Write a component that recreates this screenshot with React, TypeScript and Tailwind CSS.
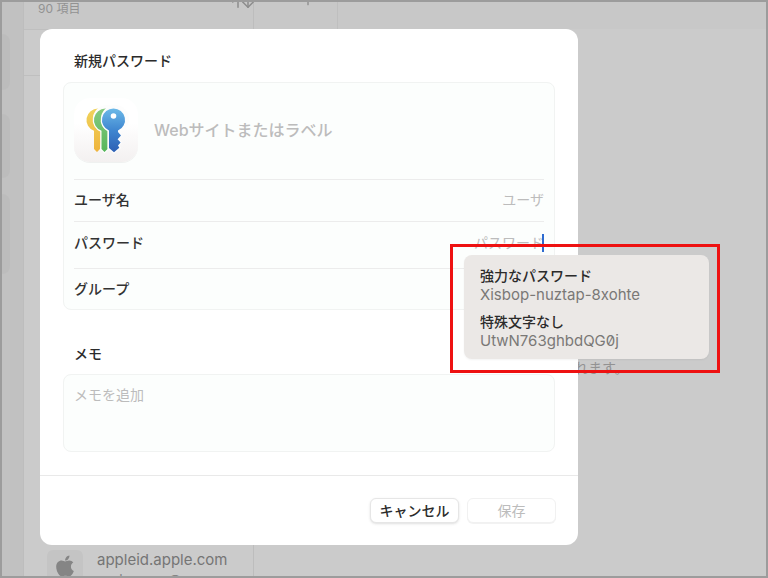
import React from 'react';
import { FaApple } from 'react-icons/fa';
import { ArrowDown, ArrowUp, Plus } from 'lucide-react';

interface Suggestion {
  title: string;
  value: string;
}

const suggestions: Suggestion[] = [
  { title: '強力なパスワード', value: 'Xisbop-nuztap-8xohte' },
  { title: '特殊文字なし', value: 'UtwN763ghbdQG0j' }
];

const KeysIcon: React.FC = () => (
  <svg viewBox="0 0 64 64" className="size-16 shrink-0 rounded-2xl bg-linear-to-b from-white from-40% to-[#f3f0f0] shadow-2xs" aria-hidden="true">
    <defs>
      <linearGradient id="yellow" x1="0" y1="0" x2="0" y2="1">
        <stop offset="0" stopColor="#f0d35c" />
        <stop offset="1" stopColor="#efb43c" />
      </linearGradient>
      <linearGradient id="green" x1="0" y1="0" x2="0" y2="1">
        <stop offset="0" stopColor="#86ca80" />
        <stop offset="1" stopColor="#56b65a" />
      </linearGradient>
      <linearGradient id="blue" x1="0" y1="0" x2="0" y2="1">
        <stop offset="0" stopColor="#6cb9e8" />
        <stop offset="0.5" stopColor="#3f86d0" />
        <stop offset="1" stopColor="#2d5fb4" />
      </linearGradient>
    </defs>
    <path d="M24 10.5a11.5 11.5 0 0 1 5 21.9L26 51l-3 3-3-3V32.8A11.5 11.5 0 0 1 24 10.5z" fill="url(#yellow)" />
    <circle cx="33" cy="21" r="14" fill="#fdfdfd" />
    <path d="M31.5 10.5a11.5 11.5 0 0 1 2 22V51l-3 3-3-3V32.8A11.5 11.5 0 0 1 31.5 10.5z" fill="url(#green)" stroke="#fcfcfc" strokeWidth="2.6" paintOrder="stroke" />
    <circle cx="41" cy="21" r="14" fill="#fdfdfd" />
    <path d="M39.5 10.5a11.5 11.5 0 0 1 4.5 22.1V34l3 3.4-3.4 3.8 3 3.4-2.6 2.9 1.3 2.2-5.3 4.5-5-4.3V32.6a11.5 11.5 0 0 1 4.5-22.1z" fill="url(#blue)" stroke="#fcfcfc" strokeWidth="2.6" paintOrder="stroke" />
    <circle cx="39.5" cy="18" r="2.8" fill="#fff" />
  </svg>
);

const Background: React.FC = () => (
  <div className="flex min-h-screen p-0.5">
    <nav className="w-[22px] shrink-0 border-r border-[#bdbdbd] bg-[#c1c1c1] pt-8">
      <div className="h-14 w-2 rounded-r-lg bg-[#bcbcbc]" />
      <div className="mt-6 h-16 w-2 rounded-r-lg bg-[#bcbcbc]" />
      <div className="mt-4 h-20 w-2 rounded-r-lg bg-[#bcbcbc]" />
    </nav>

    <section className="flex w-[230px] shrink-0 flex-col border-r border-[#bdbdbd]">
      <header className="flex h-[28px] items-start justify-between border-b border-[#bfbfbf] bg-[#c8c8c8] pl-3.5">
        <p className="text-xs leading-[14px] text-[#929292]">90 項目</p>
        <div className="-mt-[9px] -mr-1 flex text-[#8c8c8c]">
          <ArrowUp className="-mr-2 size-[18px]" strokeWidth={2} />
          <ArrowDown className="size-[18px]" strokeWidth={2} />
        </div>
      </header>
      <div className="h-[46px] border-b border-[#bfbfbf]" />
      <div className="mt-auto flex h-[30px] gap-3.5 overflow-hidden pt-1 pl-[23px]">
        <div className="flex h-9 w-9 shrink-0 items-start justify-center rounded-md bg-[#c4c4c4] pt-1">
          <FaApple className="size-6 text-[#858585]" />
        </div>
        <div className="text-[#757575]">
          <p className="text-[15px] leading-5">appleid.apple.com</p>
          <p className="text-sm leading-5 text-[#858585]">norkamura@</p>
        </div>
      </div>
    </section>

    <main className="flex grow flex-col">
      <header className="flex h-[27px] bg-[#c8c8c8]">
        <div className="flex w-[84px] justify-center border-r border-[#bfbfbf] pl-6">
          <Plus className="-mt-2.5 size-4 text-[#8c8c8c]" strokeWidth={2} />
        </div>
      </header>
      <p className="mt-[329px] pl-[306px] text-sm leading-5 text-[#929292]">されます。</p>
    </main>
  </div>
);

const SuggestionMenu: React.FC = () => (
  <div className="absolute top-[22px] right-[-176px] z-10 w-[270px] border-3 border-[#ee1111] pt-2 pr-2 pb-[11px] pl-[11px]">
    <ul className="flex flex-col gap-2 rounded-lg bg-[#ebe8e6] px-4 pt-3 pb-2 shadow-xs">
      {suggestions.map(item => (
        <li key={item.value}>
          <button type="button" className="block w-full text-left">
            <span className="block text-sm leading-[18px] font-medium text-[#2b2b2b]">{item.title}</span>
            <span className="block text-[15px] leading-5 text-[#7a7876] slashed-zero">{item.value}</span>
          </button>
        </li>
      ))}
    </ul>
  </div>
);

const PasswordDialog: React.FC = () => (
  <form role="dialog" aria-labelledby="dialog-title" className="rounded-xl bg-white text-sm text-[#333333]">
    <div className="px-[23px] pt-[22px] pb-[23px]">
      <h1 id="dialog-title" className="px-[11px] leading-5 font-medium text-[#2b2b2b]">新規パスワード</h1>

      <div className="mt-[11px] rounded-lg border border-[#f1f3f2] bg-[#fcfefd] px-2.5">
        <div className="flex h-[97px] items-center gap-4 border-b border-[#ececec] pb-0.5">
          <KeysIcon />
          <input
            aria-label="Webサイトまたはラベル"
            placeholder="Webサイトまたはラベル"
            className="min-w-0 grow bg-transparent text-base font-medium outline-none placeholder:text-[#bcbcbc]"
          />
        </div>
        <div className="flex h-[42px] items-center border-b border-[#ececec] pb-0.5">
          <label htmlFor="user" className="font-medium">ユーザ名</label>
          <input id="user" placeholder="ユーザ" className="min-w-0 grow bg-transparent text-right outline-none placeholder:text-[#bcbcbc]" />
        </div>
        <div className="relative flex h-[47px] items-center border-b border-[#ececec] pb-1">
          <label htmlFor="password" className="font-medium">パスワード</label>
          <input id="password" placeholder="パスワード" className="min-w-0 grow bg-transparent text-right outline-none placeholder:text-[#bcbcbc]" />
          <span className="absolute right-0 h-[18px] w-0.5 bg-[#2e6bd0]" />
          <SuggestionMenu />
        </div>
        <div className="flex h-[40px] items-center font-medium">グループ</div>
      </div>

      <label htmlFor="memo" className="mt-[34px] block px-[11px] leading-5 font-medium text-[#2b2b2b]">メモ</label>
      <textarea
        id="memo"
        placeholder="メモを追加"
        className="mt-2.5 block h-[78px] w-full resize-none rounded-lg border border-[#f1f3f2] bg-[#fcfefd] px-2.5 py-2.5 leading-5 outline-none placeholder:text-[#bcbcbc]"
      />
    </div>

    <footer className="flex justify-end gap-2 border-t border-[#e9e9e9] px-[22px] py-[22px]">
      <button type="button" className="h-[25px] w-[89px] rounded-md border border-[#e6e6e6] bg-white leading-5 font-medium text-[#2b2b2b] shadow-sm">キャンセル</button>
      <button type="submit" disabled className="h-[25px] w-[89px] rounded-md border border-[#f1f1f1] bg-white leading-5 text-[#bcbcbc] shadow-2xs">保存</button>
    </footer>
  </form>
);

const App: React.FC = () => {
  return (
    <div className="relative min-h-screen overflow-hidden bg-[#cbcbcb] font-['Inter','Noto_Sans_CJK_JP',sans-serif]">
      <Background />
      <div className="absolute inset-0 border-2 border-[#9c9c9c] pt-[27px] pr-[188px] pl-[38px]">
        <PasswordDialog />
      </div>
    </div>
  );
};

export default App;
